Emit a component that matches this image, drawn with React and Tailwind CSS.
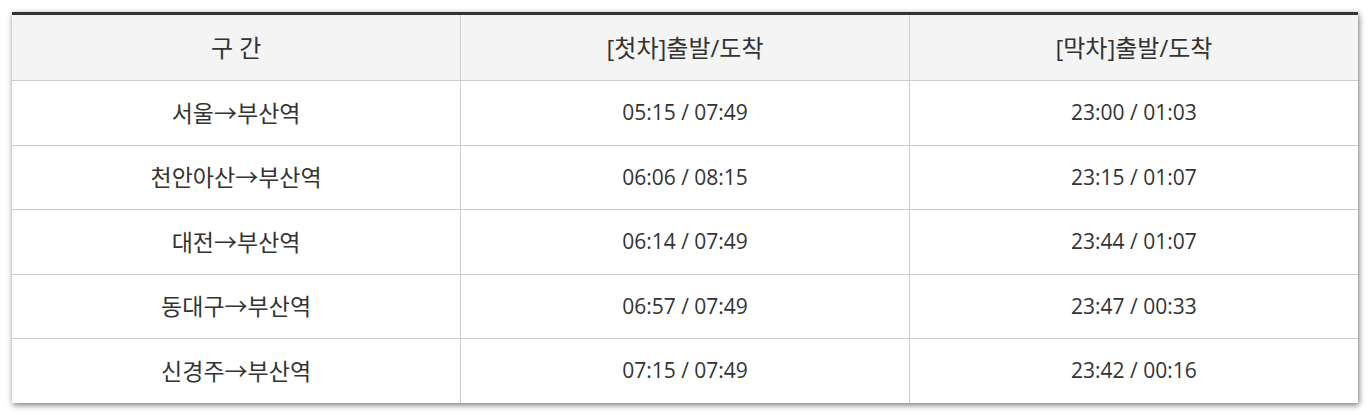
import React from 'react';

const rows = [
  ['서울→부산역', '05:15 / 07:49', '23:00 / 01:03'],
  ['천안아산→부산역', '06:06 / 08:15', '23:15 / 01:07'],
  ['대전→부산역', '06:14 / 07:49', '23:44 / 01:07'],
  ['동대구→부산역', '06:57 / 07:49', '23:47 / 00:33'],
  ['신경주→부산역', '07:15 / 07:49', '23:42 / 00:16'],
];

const App = () => {
  return (
    <div className="w-[1371px] h-[415px] bg-white pt-[12px] pl-[12px]" style={{ fontFamily: '"Open Sans", "Noto Sans CJK KR", sans-serif' }}>
      <table className="w-[1346px] border-collapse table-fixed border-t-[3px] border-t-[#333] shadow-[1px_2px_6px_rgba(0,0,0,0.55)] text-[#333]">
        <thead>
          <tr className="bg-[#f4f4f4] h-[67px]">
            <th className="font-normal text-[24px] border-r border-b border-[#ccc]">구 간</th>
            <th className="font-normal text-[24px] border-r border-b border-[#ccc]">[첫차]출발/도착</th>
            <th className="font-normal text-[24px] border-b border-[#ccc]">[막차]출발/도착</th>
          </tr>
        </thead>
        <tbody>
          {rows.map((r, i) => (
            <tr key={i} className="h-[64.5px]">
              <td className={`text-center text-[23px] border-r border-[#ccc] ${i < 4 ? 'border-b' : ''}`}>{r[0]}</td>
              <td className={`text-center text-[21px] border-r border-[#ccc] ${i < 4 ? 'border-b' : ''}`}>{r[1]}</td>
              <td className={`text-center text-[21px] border-[#ccc] ${i < 4 ? 'border-b' : ''}`}>{r[2]}</td>
            </tr>
          ))}
        </tbody>
      </table>
    </div>
  );
};

export default App;
